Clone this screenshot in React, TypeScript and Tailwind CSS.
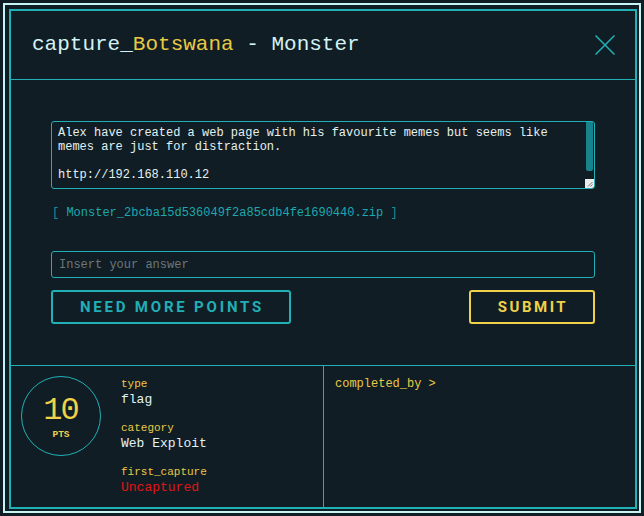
import React from "react";

const mono = { fontFamily: '"Liberation Mono", "DejaVu Sans Mono", monospace' };

export default function App() {
  return (
    <div className="w-[644px] h-[516px] bg-[#111d24] p-[3px] overflow-hidden" style={mono}>
      <div className="w-full h-full border-2 border-[#c6f3f3] pl-[4px] pt-[4px] pr-[2px] pb-[2px]">
        <div className="w-full h-full border-2 border-[#20b0b6] flex flex-col">
          {/* Header */}
          <div className="h-[69px] border-b border-[#20b0b6] flex items-center justify-between pl-[21px] pr-[20px] shrink-0">
            <div className="text-[21px] leading-[24px] text-[#d3f3f5]">
              capture_<span className="text-[#e8c944]">Botswana</span> - Monster
            </div>
            <svg width="20" height="20" viewBox="0 0 20 20" className="block">
              <path d="M0.5 0.5 L19.5 19.5 M19.5 0.5 L0.5 19.5" stroke="#20b0b6" strokeWidth="1.5" fill="none" />
            </svg>
          </div>

          {/* Body */}
          <div className="flex-1 px-[40px] pt-[41px] flex flex-col">
            <div className="relative h-[68px] border border-[#20b0b6] rounded-[3px] pl-[6px] pt-[4px] pr-[14px] text-[12px] leading-[14px] text-[#e4f1f1] overflow-hidden">
              <div>Alex have created a web page with his favourite memes but seems like</div>
              <div>memes are just for distraction.</div>
              <div>&nbsp;</div>
              <div>http://192.168.110.12</div>
              <div className="absolute right-[1px] top-0 w-[7px] h-[49px] bg-[#16848a] rounded-b-[2px]" />
              <div className="absolute right-0 bottom-0 w-[9px] h-[9px] bg-[#ececec] flex items-end justify-end p-[1px]">
                <svg width="6" height="6" viewBox="0 0 6 6">
                  <path d="M5.5 1 L1 5.5 M5.5 3.5 L3.5 5.5" stroke="#777" strokeWidth="1" />
                </svg>
              </div>
            </div>

            <div className="mt-[16px] text-[12px] leading-[16px] pl-[1px]">
              <span className="text-[#178f95]">[ </span>
              <span className="text-[#1ca8ae]">Monster_2bcba15d536049f2a85cdb4fe1690440.zip</span>
              <span className="text-[#178f95]"> ]</span>
            </div>

            <div className="mt-[30px] h-[27px] border border-[#20b0b6] rounded-[3px] pl-[7px] flex items-center text-[12px] text-[#6c777c]">
              Insert your answer
            </div>

            <div className="mt-[12px] flex justify-between">
              <div
                className="w-[240px] h-[34px] border-2 border-[#20b0b6] rounded-[3px] flex items-center justify-center text-[15px] font-bold tracking-[2.8px] text-[#22aeb6] pl-[2px]"
                style={{ fontFamily: 'Roboto, "DejaVu Sans", sans-serif' }}
              >
                NEED MORE POINTS
              </div>
              <div
                className="w-[126px] h-[34px] border-2 border-[#f0d14a] rounded-[3px] flex items-center justify-center text-[15px] font-bold tracking-[2.5px] text-[#f0d14a] pl-[2px]"
                style={{ fontFamily: 'Roboto, "DejaVu Sans", sans-serif' }}
              >
                SUBMIT
              </div>
            </div>
          </div>

          {/* Bottom */}
          <div className="h-[142px] border-t border-[#20b0b6] flex shrink-0">
            <div className="w-[313px] border-r border-[#20b0b6] flex">
              <div className="ml-[10px] mt-[10px] w-[80px] h-[80px] rounded-full border border-[#20b0b6] flex flex-col items-center pt-[19px] shrink-0">
                <div className="text-[32px] leading-[30px] tracking-[-2px] text-[#f0d14a] pr-[1px]">10</div>
                <div className="mt-[4px] text-[9.5px] leading-[10px] font-bold text-[#f0d14a]">PTS</div>
              </div>
              <div className="ml-[20px] pt-[11px] flex flex-col">
                <div className="text-[11px] leading-[14px] text-[#e9c947]">type</div>
                <div className="mt-[1px] text-[13px] leading-[16px] text-[#e0f3f5]">flag</div>
                <div className="mt-[13px] text-[11px] leading-[14px] text-[#e9c947]">category</div>
                <div className="mt-[1px] text-[13px] leading-[16px] text-[#e0f3f5]">Web Exploit</div>
                <div className="mt-[13px] text-[11px] leading-[14px] text-[#e9c947]">first_capture</div>
                <div className="mt-[1px] text-[13px] leading-[16px] text-[#e01515]">Uncaptured</div>
              </div>
            </div>
            <div className="flex-1 pl-[11px] pt-[10.5px]">
              <div className="text-[12px] leading-[14px] text-[#e9c947]">completed_by &gt;</div>
            </div>
          </div>
        </div>
      </div>
    </div>
  );
}
